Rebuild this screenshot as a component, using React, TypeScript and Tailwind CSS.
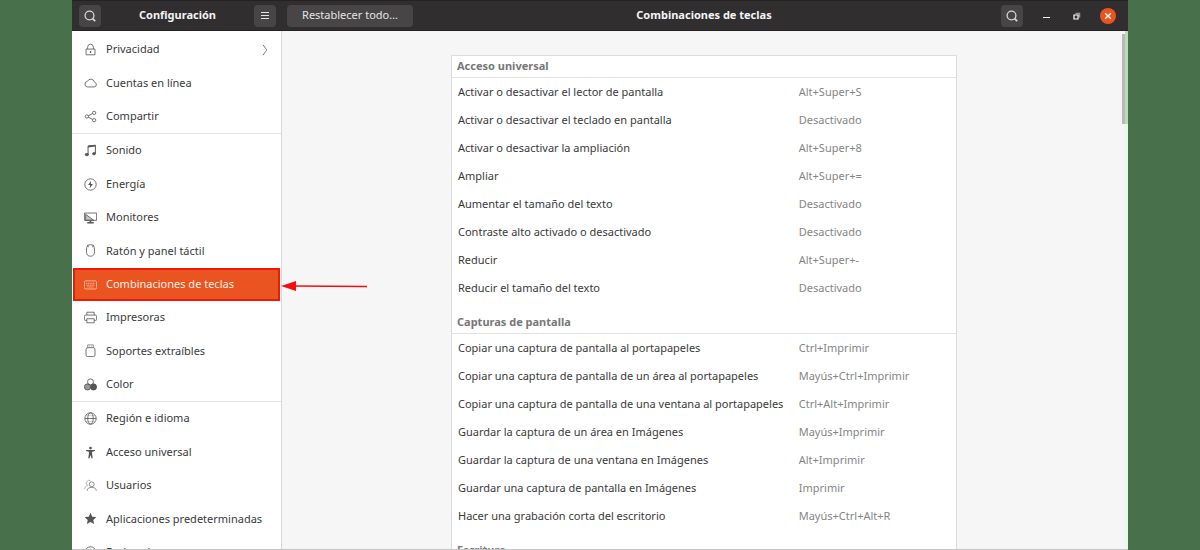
import type { ReactNode } from "react";

type Item = { label: string; icon: ReactNode; more?: boolean; selected?: boolean };
type Section = { title: string; rows: [string, string][] };

function Icon({ children }: { children: ReactNode }) {
  return (
    <svg
      viewBox="0 0 16 16"
      className="size-[13px] shrink-0"
      fill="none"
      stroke="currentColor"
      strokeWidth="1"
      aria-hidden="true"
    >
      {children}
    </svg>
  );
}

const lock = (
  <Icon>
    <path d="M2.5 7.5h11v7h-11zM4.5 7.500V5a3.500 3.500 0 0 1 7 0v2.500" />
    <path d="M8 10v2.200" strokeWidth="1.600" />
  </Icon>
);
const cloud = (
  <Icon>
    <path d="M4 13.500h8.500a3 3 0 0 0 .4-5.900A4.600 4.600 0 0 0 4.200 6.600 3.500 3.500 0 0 0 4 13.500z" />
  </Icon>
);
const share = (
  <Icon>
    <circle cx="3.500" cy="8" r="2" />
    <circle cx="12.500" cy="3.500" r="2" />
    <circle cx="12.500" cy="12.500" r="2" />
    <path d="M5.300 7.100l5.400-2.700M5.300 8.900l5.400 2.700" />
  </Icon>
);
const note = (
  <Icon>
    <path d="M5 13V2.500l9-1V12" strokeWidth="1.200" />
    <path d="M5 3.200l9-1" strokeWidth="2" />
    <ellipse cx="3.500" cy="13" rx="2" ry="1.500" fill="currentColor" />
    <ellipse cx="12.300" cy="12" rx="1.800" ry="1.400" fill="currentColor" />
  </Icon>
);
const power = (
  <Icon>
    <circle cx="8" cy="8" r="7" />
    <path d="M8.800 3.500L5 8.700h2.600L7 12.500l4-5.200H8.300z" fill="currentColor" stroke="none" />
  </Icon>
);
const monitor = (
  <Icon>
    <path d="M.5 2.500h15v9H.5z" />
    <path d="M2 4l10 7.500H2z" fill="currentColor" fillOpacity=".35" />
    <path d="M8 12v2M4 14.500h8" strokeWidth="2" />
  </Icon>
);
const mouse = (
  <Icon>
    <path d="M4.500 1.500Q8 .3 11.500 1.500 13 3.500 13 9c0 4-1.500 6-5 6s-5-2-5-6q0-5.500 1.500-7.500zM4.500 1.500L5.500 4M11.500 1.500l-1 2.500" />
  </Icon>
);
const keyboard = (
  <Icon>
    <rect x=".5" y="3.500" width="15" height="10" rx="1.500" />
    <path d="M2.500 6.500h11M3 8.800h10M4 11h8" strokeDasharray="1.500 .6" />
  </Icon>
);
const printer = (
  <Icon>
    <path d="M3.500 5V1.500h9V5M3.500 11.500h-2a1 1 0 0 1-1-1V6.500a1.500 1.500 0 0 1 1.500-1.500h12a1.500 1.500 0 0 1 1.500 1.500v4a1 1 0 0 1-1 1h-2" />
    <path d="M3.500 9.500h9v5h-9z" />
  </Icon>
);
const usb = (
  <Icon>
    <path d="M4.500 4.500V1h7v3.500M6.500 2v1.200M9.500 2v1.200" strokeOpacity=".7" />
    <rect x="2.500" y="4.500" width="11" height="11" rx="2" />
  </Icon>
);
const color = (
  <Icon>
    <circle cx="8" cy="4.800" r="3.700" />
    <circle cx="4.300" cy="11" r="3.800" fill="currentColor" fillOpacity=".6" />
    <circle cx="11.700" cy="11" r="3.800" fill="currentColor" />
  </Icon>
);
const globe = (
  <Icon>
    <circle cx="8" cy="8" r="7" />
    <ellipse cx="8" cy="8" rx="3.400" ry="7" />
    <path d="M1 8h14" />
    <path d="M2.500 4.500h11M2.500 11.500h11" strokeOpacity=".3" />
  </Icon>
);
const access = (
  <Icon>
    <circle cx="8" cy="2.500" r="1.700" fill="currentColor" stroke="none" />
    <path d="M2.500 5h11v1.300l-3.500.8v3l.8 4.900H9.200L8 11l-1.200 4H5.200L6 10.100v-3l-3.500-.8z" fill="currentColor" stroke="none" />
  </Icon>
);
const users = (
  <Icon>
    <circle cx="9.500" cy="6.500" r="3" strokeOpacity=".8" />
    <path d="M4 14.500c0-3 2-4.200 5.500-4.200s5.500 1.200 5.500 4.200" strokeOpacity=".8" />
    <path d="M8 2.200A3.200 3.200 0 1 0 4.500 8C2 8.500.8 10 .8 12.500" strokeOpacity=".5" />
  </Icon>
);
const star = (
  <Icon>
    <path d="M8 .8l2.100 4.900 5.200.5-3.900 3.500 1.100 5.200L8 12.200l-4.500 2.700 1.100-5.200L.7 6.200l5.200-.5z" fill="currentColor" stroke="none" />
  </Icon>
);
const clock = (
  <Icon>
    <circle cx="8" cy="8" r="7" />
    <path d="M8 3.500V8l3 2" />
  </Icon>
);

const groups: { height: string; items: Item[] }[] = [
  {
    height: "min-h-[100px]",
    items: [
      { label: "Privacidad", icon: lock, more: true },
      { label: "Cuentas en línea", icon: cloud },
      { label: "Compartir", icon: share },
    ],
  },
  {
    height: "min-h-[267px]",
    items: [
      { label: "Sonido", icon: note },
      { label: "Energía", icon: power },
      { label: "Monitores", icon: monitor },
      { label: "Ratón y panel táctil", icon: mouse },
      { label: "Combinaciones de teclas", icon: keyboard, selected: true },
      { label: "Impresoras", icon: printer },
      { label: "Soportes extraíbles", icon: usb },
      { label: "Color", icon: color },
    ],
  },
  {
    height: "min-h-[167px]",
    items: [
      { label: "Región e idioma", icon: globe },
      { label: "Acceso universal", icon: access },
      { label: "Usuarios", icon: users },
      { label: "Aplicaciones predeterminadas", icon: star },
      { label: "Fecha y hora", icon: clock },
    ],
  },
];

const sections: Section[] = [
  {
    title: "Acceso universal",
    rows: [
      ["Activar o desactivar el lector de pantalla", "Alt+Super+S"],
      ["Activar o desactivar el teclado en pantalla", "Desactivado"],
      ["Activar o desactivar la ampliación", "Alt+Super+8"],
      ["Ampliar", "Alt+Super+="],
      ["Aumentar el tamaño del texto", "Desactivado"],
      ["Contraste alto activado o desactivado", "Desactivado"],
      ["Reducir", "Alt+Super+-"],
      ["Reducir el tamaño del texto", "Desactivado"],
    ],
  },
  {
    title: "Capturas de pantalla",
    rows: [
      ["Copiar una captura de pantalla al portapapeles", "Ctrl+Imprimir"],
      ["Copiar una captura de pantalla de un área al portapapeles", "Mayús+Ctrl+Imprimir"],
      ["Copiar una captura de pantalla de una ventana al portapapeles", "Ctrl+Alt+Imprimir"],
      ["Guardar la captura de un área en Imágenes", "Mayús+Imprimir"],
      ["Guardar la captura de una ventana en Imágenes", "Alt+Imprimir"],
      ["Guardar una captura de pantalla en Imágenes", "Imprimir"],
      ["Hacer una grabación corta del escritorio", "Mayús+Ctrl+Alt+R"],
    ],
  },
  { title: "Escritura", rows: [] },
];

function SearchButton() {
  return (
    <button
      type="button"
      aria-label="Buscar"
      className="flex size-[22px] items-center justify-center rounded-sm bg-[#474546] text-[#d8d8d8]"
    >
      <svg viewBox="0 0 12 12" className="size-3" fill="none" stroke="currentColor" strokeWidth="1.300" aria-hidden="true">
        <circle cx="5.500" cy="5.500" r="4.400" />
        <path d="M8.600 8.600l2.600 2.600" strokeWidth="1.800" />
      </svg>
    </button>
  );
}

function HeaderBar() {
  return (
    <header className="flex h-[31px] shrink-0 border-t border-b border-t-[#242223] border-b-[#242223] bg-[#302e2f] text-[11px] text-[#f4f4f4]">
      <div className="flex w-[210px] shrink-0 items-center justify-between pr-[6px] pl-[7px]">
        <SearchButton />
        <h1 className="font-bold">Configuración</h1>
        <button
          type="button"
          aria-label="Menú"
          className="flex size-[22px] items-center justify-center rounded-sm bg-[#474546]"
        >
          <svg viewBox="0 0 10 10" className="size-[10px]" stroke="#e4e4e4" aria-hidden="true">
            <path d="M1 1.500h8M1 4.500h8M1 7.500h8" />
          </svg>
        </button>
      </div>
      <div className="grid flex-1 grid-cols-[1fr_auto_1fr] items-center pr-[7px] pl-[5px]">
        <button
          type="button"
          className="h-[22px] w-[126px] rounded-sm bg-[#474546] text-[#e4e4e4]"
        >
          Restablecer todo…
        </button>
        <h2 className="font-bold">Combinaciones de teclas</h2>
        <div className="flex items-center justify-end gap-[15px] pr-[5px]">
          <SearchButton />
          <button type="button" aria-label="Minimizar" className="flex size-4 items-center justify-center">
            <svg viewBox="0 0 16 16" className="size-4" stroke="white" aria-hidden="true">
              <path d="M5 9.500h7" />
            </svg>
          </button>
          <button type="button" aria-label="Restaurar" className="flex size-4 items-center justify-center">
            <svg viewBox="0 0 16 16" className="size-4" fill="none" aria-hidden="true">
              <path d="M6.500 5.500h4v4" stroke="#9a9899" strokeWidth="1.500" />
              <path d="M5 7h4v4H5z" stroke="white" strokeWidth="1.200" />
            </svg>
          </button>
          <button
            type="button"
            aria-label="Cerrar"
            className="flex size-4 items-center justify-center rounded-full bg-[#e95420]"
          >
            <svg viewBox="0 0 16 16" className="size-4" stroke="white" strokeWidth="1.400" aria-hidden="true">
              <path d="M5.200 5.200l5.600 5.600M10.800 5.200l-5.600 5.600" />
            </svg>
          </button>
        </div>
      </div>
    </header>
  );
}

function SidebarItem({ item }: { item: Item }) {
  return (
    <li className="relative flex">
      <a
        href="#"
        aria-current={item.selected ? "page" : undefined}
        className={
          item.selected
            ? "mx-px flex flex-1 items-center gap-[9px] border-2 border-[#f01808] bg-[#e95420] pl-[9px] text-[#fff0ea]"
            : "flex flex-1 items-center gap-[9px] pr-3 pl-3"
        }
      >
        <span className={item.selected ? "text-[#ffc8b0]" : "text-[#555]"}>{item.icon}</span>
        <span className="flex-1 whitespace-nowrap">{item.label}</span>
        {item.more && (
          <svg viewBox="0 0 8 12" className="h-3 w-2" fill="none" stroke="#777" aria-hidden="true">
            <path d="M2 .8q3.800 5.200 3.800 5.200T2 11.200" />
          </svg>
        )}
      </a>
      {item.selected && (
        <svg viewBox="0 0 86 12" className="absolute top-3 left-full h-3 w-[86px]" aria-hidden="true">
          <path d="M12 6l74 .6" stroke="#f40d12" strokeWidth="1.500" />
          <path d="M0 6L15 1v10z" fill="#f40d12" />
        </svg>
      )}
    </li>
  );
}

function Sidebar() {
  return (
    <nav className="w-[210px] shrink-0 border-r border-[#d8d8d8] bg-white pt-[2px] text-[11px] text-[#3a3a3a]">
      {groups.map((group, i) => (
        <ul
          key={i}
          className={`grid auto-rows-fr ${group.height} ${i > 0 ? "box-content border-t border-[#e4e4e4]" : ""}`}
        >
          {group.items.map((item) => (
            <SidebarItem key={item.label} item={item} />
          ))}
        </ul>
      ))}
    </nav>
  );
}

function Shortcuts() {
  return (
    <main className="flex-1 overflow-hidden bg-[#f6f6f6] pt-6 pl-1">
      <table className="mx-auto w-full max-w-[506px] table-fixed border-separate border-spacing-0 border border-[#dcdcdc] bg-white text-left text-[11px]">
        <colgroup>
          <col className="w-[68%]" />
          <col />
        </colgroup>
        {sections.map((section, i) => (
          <tbody key={section.title}>
            <tr className={i === 0 ? "h-[22px]" : "h-8"}>
              <th
                colSpan={2}
                scope="colgroup"
                className="border-b border-[#e2e2e2] px-[5px] pb-[3px] align-bottom leading-4 font-bold text-[#777]"
              >
                {section.title}
              </th>
            </tr>
            {section.rows.map(([action, keys]) => (
              <tr key={action} className="h-7">
                <td className="px-[6px] whitespace-nowrap text-[#3a3a3a]">{action}</td>
                <td className="pl-1 whitespace-nowrap text-[#858585]">{keys}</td>
              </tr>
            ))}
          </tbody>
        ))}
      </table>
    </main>
  );
}

export default function App() {
  return (
    <div className="h-screen overflow-hidden bg-[#48714b] px-[6%] font-['Noto_Sans',sans-serif]">
      <div className="flex h-full flex-col">
        <HeaderBar />
        <div className="flex min-h-0 flex-1 overflow-hidden border-b border-[#c4c4c4]">
          <Sidebar />
          <Shortcuts />
          <div className="w-[3px] bg-[#f6f6f6] pt-[3px]">
            <div className="h-[90px] bg-[#b9b9bb]" />
          </div>
          <div className="w-[3px] bg-[#e6fbe6]">
            <div className="h-[93px] bg-[#b9dfb9]" />
          </div>
        </div>
      </div>
    </div>
  );
}
